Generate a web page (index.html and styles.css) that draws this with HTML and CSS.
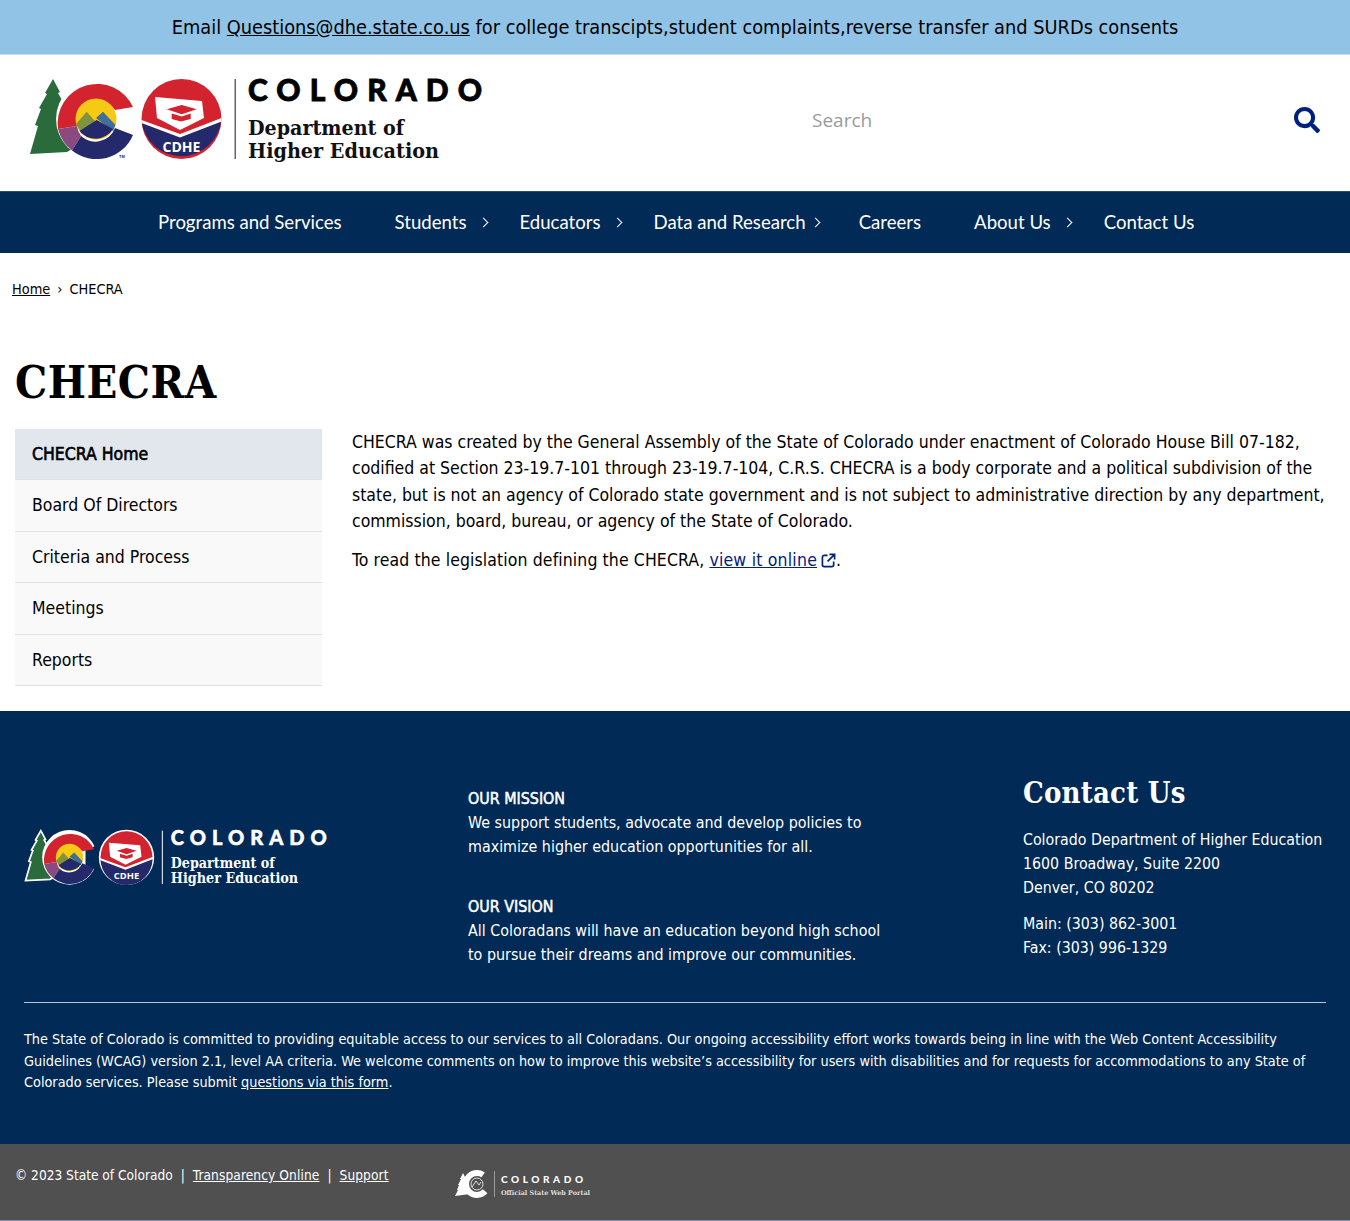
FILE: index.html
```html
<!DOCTYPE html>
<html lang="en">
<head>
<meta charset="utf-8">
<title>CHECRA</title>
<link rel="stylesheet" href="styles.css">
</head>
<body>
<div class="alert">Email <a href="#">Questions@dhe.state.co.us</a> for college transcipts,student complaints,reverse transfer and SURDs consents</div>
<header class="masthead">
  <svg class="logo" viewBox="0 -8 456 92" role="img" aria-label="Colorado Department of Higher Education">
    <polygon fill="#2a6b3c" points="23,0 30,13 28,14 36,28 34,29 42,50 42,70 37,73 0,75 8,47 5,46 11,30 9,29 17,15 15,14"/>
    <circle cx="66" cy="40" r="40" fill="#fff"/>
    <path fill="#d2232f" d="M103 28A39.500 39.500 0 0 0 28 50L47 47A21 21 0 0 1 85 31Z"/>
    <path fill="#8a4a80" d="M28 50A39.500 39.500 0 0 0 42 71.500L51 57A21 21 0 0 1 47 47Z"/>
    <path fill="#23296b" d="M103 56A39.500 39.500 0 0 1 42 71.500L51 57A21 21 0 0 0 85 49Z"/>
    <circle cx="66" cy="40" r="20.500" fill="#f6c913"/>
    <path fill="#7f9341" d="M46 45L56.700 32.700 66.700 44 52 55Z"/>
    <path fill="#3f6f9c" d="M66 39L73 32.700 85.500 46 83 52Z"/>
    <path fill="#23296b" d="M49.500 52L66.700 41 83 50A20.500 20.500 0 0 1 49.500 52Z"/>
    <text class="tm" x="89" y="79">TM</text>
    <circle cx="151.500" cy="40" r="40" fill="#d2232f"/>
    <path fill="#23296b" d="M111.700 43L150 58 191 42A40 40 0 0 1 111.700 43Z"/>
    <path fill="#fff" d="M111.500 41L150 55 191.500 39 191.500 42.500 150 58.500 111.500 44Z"/>
    <path fill="#fff" d="M125 18L172 22 174 39 150 51 127 39Z"/>
    <path fill="#d2232f" d="M136.700 30.300L151.700 26 166.700 30.300 151.700 35.300Z"/>
    <path fill="#d2232f" d="M141.700 34.500L151.700 37.500 160.700 34.500 160.700 40 151 42.500 141.700 40Z"/>
    <text class="seal" x="132.500" y="73" textLength="38" lengthAdjust="spacingAndGlyphs">CDHE</text>
    <rect x="204.500" y="0" width="1.500" height="80" fill="#666"/>
    <text class="wordmark" x="218" y="22" textLength="234">COLORADO</text>
    <text class="dept" x="218" y="56" textLength="156" lengthAdjust="spacingAndGlyphs">Department of</text>
    <text class="dept" x="218" y="79" textLength="191" lengthAdjust="spacingAndGlyphs">Higher Education</text>
  </svg>
  <form class="search">
    <span class="search-label">Search</span>
    <svg class="search-icon" viewBox="0 0 512 512" aria-hidden="true"><path d="M505 442.700L405.300 343c-4.500-4.500-10.600-7-17-7H372c27.600-35.300 44-79.700 44-128C416 93.100 322.900 0 208 0S0 93.100 0 208s93.100 208 208 208c48.300 0 92.700-16.400 128-44v16.300c0 6.400 2.500 12.500 7 17l99.700 99.700c9.400 9.400 24.600 9.400 33.900 0l28.300-28.300c9.400-9.400 9.400-24.600.1-34zM208 336c-70.700 0-128-57.200-128-128 0-70.700 57.200-128 128-128 70.700 0 128 57.200 128 128 0 70.700-57.200 128-128 128z"/></svg>
  </form>
</header>
<nav class="mainnav">
  <ul class="mainnav-list">
    <li class="mainnav-item">Programs and Services</li>
    <li class="mainnav-item has-sub">Students</li>
    <li class="mainnav-item has-sub">Educators</li>
    <li class="mainnav-item has-sub has-sub-tight">Data and Research</li>
    <li class="mainnav-item">Careers</li>
    <li class="mainnav-item has-sub">About Us</li>
    <li class="mainnav-item">Contact Us</li>
  </ul>
</nav>
<div class="crumbs"><a href="#">Home</a><span class="crumb-sep">›</span>CHECRA</div>
<main class="page">
  <h1 class="page-title">CHECRA</h1>
  <div class="page-body">
    <ul class="sidenav">
      <li class="sidenav-item is-active">CHECRA Home</li>
      <li class="sidenav-item">Board Of Directors</li>
      <li class="sidenav-item">Criteria and Process</li>
      <li class="sidenav-item">Meetings</li>
      <li class="sidenav-item">Reports</li>
    </ul>
    <div class="content">
      <p class="lead">CHECRA was created by the General Assembly of the State of Colorado under enactment of Colorado House Bill 07-182, codified at Section 23-19.7-101 through 23-19.7-104, C.R.S. CHECRA is a body corporate and a political subdivision of the state, but is not an agency of Colorado state government and is not subject to administrative direction by any department, commission, board, bureau, or agency of the State of Colorado.</p>
      <p class="lead lead-spaced">To read the legislation defining the CHECRA, <a class="extlink" href="#">view it online</a><svg class="ext-icon" viewBox="0 0 16 16" aria-hidden="true"><path d="M7 2.500H3.500a2 2 0 0 0-2 2v8a2 2 0 0 0 2 2h8a2 2 0 0 0 2-2V9M9 1.500h5.500V7M14 2L7 9"/></svg>.</p>
    </div>
  </div>
</main>
<footer class="sitefoot">
  <div class="foot-top">
    <svg class="foot-logo" viewBox="-2 -10 460 96" role="img" aria-label="Colorado Department of Higher Education">
      <polygon fill="#2a6b3c" stroke="#fff" stroke-width="2.500" points="23,0 30,13 28,14 36,28 34,29 42,50 42,70 37,73 0,75 8,47 5,46 11,30 9,29 17,15 15,14"/>
      <circle cx="66" cy="40" r="41" fill="#fff"/>
      <path fill="#012a56" d="M90 29L112 20 112 62 90 51Z"/>
      <path fill="#d2232f" d="M103 28A39.500 39.500 0 0 0 28 50L47 47A21 21 0 0 1 85 31Z"/>
      <path fill="#8a4a80" d="M28 50A39.500 39.500 0 0 0 42 71.500L51 57A21 21 0 0 1 47 47Z"/>
      <path fill="#23296b" d="M103 56A39.500 39.500 0 0 1 42 71.500L51 57A21 21 0 0 0 85 49Z"/>
      <circle cx="66" cy="40" r="20.500" fill="#f6c913"/>
      <path fill="#7f9341" d="M46 45L56.700 32.700 66.700 44 52 55Z"/>
      <path fill="#3f6f9c" d="M66 39L73 32.700 85.500 46 83 52Z"/>
      <path fill="#23296b" d="M49.500 52L66.700 41 83 50A20.500 20.500 0 0 1 49.500 52Z"/>
      <circle cx="151.500" cy="40" r="41.500" fill="#fff"/>
      <circle cx="151.500" cy="40" r="39" fill="#d2232f"/>
      <path fill="#23296b" d="M112.500 43L150 58 190.500 42A39 39 0 0 1 112.500 43Z"/>
      <path fill="#fff" d="M111.500 41L150 55 191.500 39 191.500 42.500 150 58.500 111.500 44Z"/>
      <path fill="#fff" d="M125 18L172 22 174 39 150 51 127 39Z"/>
      <path fill="#d2232f" d="M136.700 30.300L151.700 26 166.700 30.300 151.700 35.300Z"/>
      <path fill="#d2232f" d="M141.700 34.500L151.700 37.500 160.700 34.500 160.700 40 151 42.500 141.700 40Z"/>
      <text class="seal" x="132.500" y="73" textLength="38" lengthAdjust="spacingAndGlyphs">CDHE</text>
      <rect x="204.500" y="0" width="1.500" height="80" fill="#fff"/>
      <text class="wordmark wordmark-light" x="218" y="22" textLength="234">COLORADO</text>
      <text class="dept dept-light" x="218" y="56" textLength="156" lengthAdjust="spacingAndGlyphs">Department of</text>
      <text class="dept dept-light" x="218" y="79" textLength="191" lengthAdjust="spacingAndGlyphs">Higher Education</text>
    </svg>
    <div class="statements">
      <p class="statement"><strong class="statement-head">OUR MISSION</strong>We support students, advocate and develop policies to<br>maximize higher education opportunities for all.</p>
      <p class="statement"><strong class="statement-head">OUR VISION</strong>All Coloradans will have an education beyond high school<br>to pursue their dreams and improve our communities.</p>
    </div>
    <address class="contact">
      <h2 class="contact-title">Contact Us</h2>
      <p class="contact-block">Colorado Department of Higher Education<br>1600 Broadway, Suite 2200<br>Denver, CO 80202</p>
      <p class="contact-block">Main: (303) 862-3001<br>Fax: (303) 996-1329</p>
    </address>
  </div>
  <div class="a11y">
    <p class="a11y-text">The State of Colorado is committed to providing equitable access to our services to all Coloradans. Our ongoing accessibility effort works towards being in line with the Web Content Accessibility Guidelines (WCAG) version 2.1, level AA criteria. We welcome comments on how to improve this website’s accessibility for users with disabilities and for requests for accommodations to any State of Colorado services. Please submit <a href="#">questions via this form</a>.</p>
  </div>
</footer>
<div class="legal">
  <div class="legal-links">© 2023 State of Colorado<span class="pipe">|</span><a class="legal-link" href="#">Transparency Online</a><span class="pipe">|</span><a class="legal-link" href="#">Support</a></div>
  <svg class="portal-logo" viewBox="0 0 140 32" role="img" aria-label="Colorado Official State Web Portal">
    <polygon fill="#fff" points="8,3 11,9 10,9 13,14 12,14 15,24 0,26 3,20 2,20 4,15 3,15 6,9 5,9"/>
    <circle cx="22" cy="14" r="11" fill="none" stroke="#fff" stroke-width="6" stroke-dasharray="50 19" stroke-dashoffset="-8"/>
    <circle cx="22" cy="14" r="6" fill="#505050" stroke="#fff" stroke-width=".8"/>
    <path d="M17 17L21 11 24 15 26 12" fill="none" stroke="#fff" stroke-width=".8"/>
    <rect x="39" y="1" width=".7" height="26" fill="#bbb"/>
    <text class="portal-word" x="46" y="13" textLength="82">COLORADO</text>
    <text class="portal-sub" x="46" y="24.500" textLength="89" lengthAdjust="spacingAndGlyphs">Official State Web Portal</text>
  </svg>
</div>
</body>
</html>
```
FILE: styles.css
```css
* { box-sizing: border-box; }
html, body { margin: 0; padding: 0; }
body {
  font-family: "DejaVu Sans Condensed", "DejaVu Sans", sans-serif;
  font-stretch: condensed;
  color: #000;
  background: #fff;
  font-size: 16px;
}
a { color: inherit; }
.alert {
  height: 55px;
  background: #91c3e7;
  border-bottom: 1px solid #c9dbe8;
  text-align: center;
  font-size: 19.800px;
  line-height: 55px;
}
.masthead {
  height: 136px;
  display: flex;
  align-items: flex-start;
  padding: 16px 30px 0;
  justify-content: space-between;
}
.logo { width: 456px; height: 92px; display: block; flex: none; }
.tm { font: 700 4px "Liberation Sans", sans-serif; fill: #23296b; }
.seal { font: 700 14px "Open Sans", sans-serif; fill: #fff; }
.wordmark { font: 900 30px "Lato", sans-serif; fill: #000; stroke: #000; stroke-width: .8px; }
.wordmark-light { fill: #fff; stroke: #fff; }
.dept { font: 700 21px "DejaVu Serif", serif; font-stretch: normal; fill: #111; }
.dept-light { fill: #fff; }
.search {
  width: 509px;
  margin-top: 36px;
  display: flex;
  align-items: center;
  justify-content: space-between;
}
.search-label { font-size: 19px; color: #9b9b9b; font-family: "Open Sans", sans-serif; font-stretch: normal; margin-left: 1px; }
.search-icon { width: 26px; height: 26px; fill: #00207f; display: block; }
.mainnav { background: #012a56; height: 62px; box-shadow: inset 0 1px 0 #2a4a6e; }
.mainnav-list {
  list-style: none;
  margin: 0;
  padding: 0 0 0 130px;
  display: flex;
  height: 100%;
}
.mainnav-item {
  position: relative;
  padding: 0 26.500px;
  color: #fff;
  font-family: "Lato", sans-serif;
  font-stretch: normal;
  font-size: 18.600px;
  line-height: 62px;
}
.mainnav-item:first-child { padding-left: 28px; }
.has-sub::after {
  content: "";
  position: absolute;
  right: 6px;
  top: 28px;
  width: 6px;
  height: 6px;
  border-top: 1.500px solid #fff;
  border-right: 1.500px solid #fff;
  transform: rotate(45deg);
}
.has-sub-tight::after { right: 13px; }
.crumbs {
  padding: 26px 12px 0;
  font-size: 14.400px;
  line-height: 20px;
}
.crumb-sep { margin: 0 7px; }
.page { padding: 0 15px; }
.page-title {
  font-family: "DejaVu Serif Condensed", "DejaVu Serif", serif;
  font-weight: 700;
  font-size: 45px;
  letter-spacing: .5px;
  line-height: 50px;
  margin: 59px 0 21px;
}
.page-body { display: flex; gap: 30px; min-height: 282px; }
.sidenav { list-style: none; margin: 0; padding: 0; width: 307px; flex: none; }
.sidenav-item {
  height: 51.400px;
  line-height: 50px;
  padding-left: 17px;
  background: #f9f9fa;
  border-bottom: 1px solid #dfe1e4;
  font-size: 17.500px;
}
.is-active { background: #e2e7ee; -webkit-text-stroke: .6px #000; }
.content { flex: 1; min-width: 0; margin-right: -5px; }
.lead { margin: 0 0 12px; font-size: 17.500px; line-height: 26.400px; }
.lead-spaced { letter-spacing: .1px; }
.extlink { color: #00207f; letter-spacing: .2px; }
.ext-icon {
  width: 15px;
  height: 15px;
  margin-left: 4px;
  vertical-align: -2px;
  fill: none;
  stroke: #00207f;
  stroke-width: 1.800;
}
.sitefoot { background: #012a56; color: #fff; height: 433px; padding: 0 24px; }
.foot-top {
  display: flex;
  height: 292px;
  border-bottom: 1.500px solid #b9c5d2;
  padding-top: 64px;
}
.foot-logo { width: 307px; height: 64px; display: block; margin: 49px 0 0; flex: none; }
.statements { margin-left: 137px; width: 555px; padding-top: 12px; }
.statement { margin: 0 0 36px; font-size: 15.900px; line-height: 24px; }
.statement-head { display: block; font-weight: 400; -webkit-text-stroke: .5px #fff; }
.contact { font-style: normal; font-size: 15.800px; line-height: 24px; }
.contact-title {
  font-family: "DejaVu Serif Condensed", "DejaVu Serif", serif;
  font-weight: 700;
  font-size: 29px;
  letter-spacing: .2px;
  line-height: 36px;
  margin: 0 0 17px;
}
.contact-block { margin: 0 0 12px; white-space: nowrap; }
.a11y { padding-top: 26px; }
.a11y-text { margin: 0; font-size: 14.340px; line-height: 21.500px; }
.legal {
  background: #505050;
  color: #fff;
  height: 77px;
  border-bottom: 1px solid #7f94b5;
  padding: 0 15px;
  display: flex;
  align-items: flex-start;
  font-size: 13.600px;
}
.legal-links { padding-top: 21px; line-height: 20px; width: 440px; flex: none; }
.legal-link { letter-spacing: .1px; }
.pipe { margin: 0 8px; }
.portal-logo { width: 140px; height: 32px; display: block; margin-top: 26px; }
.portal-word { font: 900 10px "Lato", sans-serif; fill: #fff; }
.portal-sub { font: 700 6.500px "DejaVu Serif", serif; font-stretch: normal; fill: #ddd; }
```
